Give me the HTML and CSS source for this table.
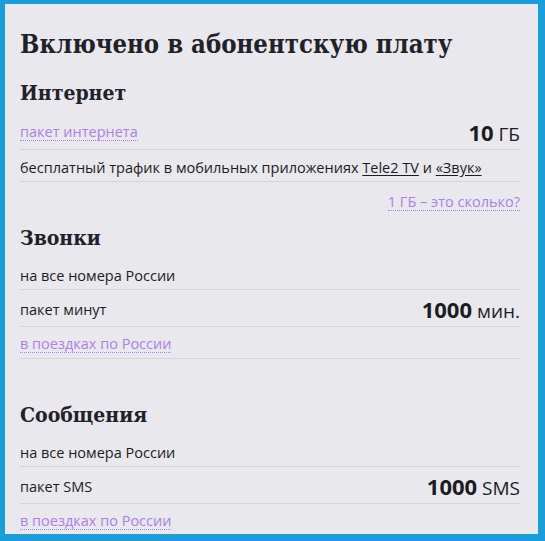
FILE: index.html
```html
<!DOCTYPE html>
<html lang="ru">
<head>
<meta charset="utf-8">
<title>Включено в абонентскую плату</title>
<link rel="stylesheet" href="styles.css">
</head>
<body>
<div class="frame">
  <div class="card">
    <h1 class="title">Включено в абонентскую плату</h1>

    <section class="section">
      <h2 class="heading">Интернет</h2>
      <div class="row row-big">
        <a class="link" href="#">пакет интернета</a>
        <span class="value"><b>10</b> ГБ</span>
      </div>
      <div class="row">
        <span>бесплатный трафик в мобильных приложениях <a class="ulink" href="#">Tele2 TV</a> и <a class="ulink" href="#">«Звук»</a></span>
      </div>
      <div class="foot">
        <a class="link" href="#">1 ГБ – это сколько?</a>
      </div>
    </section>

    <section class="section">
      <h2 class="heading">Звонки</h2>
      <div class="row">
        <span>на все номера России</span>
      </div>
      <div class="row row-big">
        <span>пакет минут</span>
        <span class="value"><b>1000</b> мин.</span>
      </div>
      <div class="row">
        <a class="link" href="#">в поездках по России</a>
      </div>
      <div class="foot"></div>
    </section>

    <section class="section">
      <h2 class="heading">Сообщения</h2>
      <div class="row">
        <span>на все номера России</span>
      </div>
      <div class="row row-big">
        <span>пакет SMS</span>
        <span class="value"><b>1000</b> SMS</span>
      </div>
      <div class="row">
        <a class="link" href="#">в поездках по России</a>
      </div>
    </section>
  </div>
</div>
</body>
</html>
```

FILE: styles.css
```css
html, body {
  margin: 0;
  padding: 0;
  background: #1a9edb;
}

.frame {
  padding: 4px 7px 7px 5px;
  height: 541px;
  box-sizing: border-box;
}

.card {
  background: #e8e8ed;
  height: 100%;
  overflow: hidden;
  padding: 25px 18px 0 15px;
  box-sizing: border-box;
  font-family: "Open Sans", "Noto Sans", sans-serif;
  font-size: 14.5px;
  color: #1b1d23;
}

.title {
  margin: 0;
  font-family: "DejaVu Serif", serif;
  font-stretch: condensed;
  font-weight: bold;
  font-size: 25.5px;
  line-height: 30px;
  color: #1f2229;
}

.heading {
  margin: 0;
  font-family: "DejaVu Serif", serif;
  font-stretch: condensed;
  font-weight: bold;
  font-size: 21px;
  line-height: 30px;
  color: #1f2229;
}

.title + .section {
  margin-top: 19px;
}

.row {
  display: flex;
  justify-content: space-between;
  align-items: center;
  box-sizing: border-box;
  height: 32px;
  padding-top: 3px;
  border-bottom: 1px solid #d3d3da;
}

.row-big {
  height: 37px;
  padding-top: 2px;
}

.heading + .row {
  margin-top: 5px;
}

.value {
  font-size: 19px;
}

.value b {
  font-size: 22px;
  font-weight: 700;
}

.link {
  color: #ad80e4;
  text-decoration: none;
  border-bottom: 1px dotted #ad80e4;
  line-height: 16px;
}

.ulink {
  color: #1b1d23;
  text-decoration: underline;
  text-underline-offset: 2px;
}

.foot {
  height: 41px;
  display: flex;
  justify-content: flex-end;
  align-items: center;
}
```
